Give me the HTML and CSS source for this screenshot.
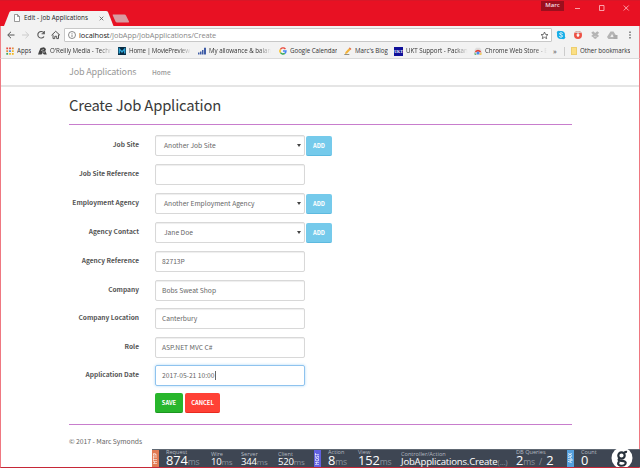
FILE: index.html
```html
<!DOCTYPE html>
<html lang="en">
<head>
<meta charset="utf-8">
<title>Edit - Job Applications</title>
<link rel="stylesheet" href="styles.css">
</head>
<body>
<div class="window">
  <header class="titlebar">
    <div class="tab">
      <svg class="tab-shape" viewBox="0 0 110 16"><path d="M0 16 L5.5 2 Q6.2 1 7.5 1 H102 Q103.5 1 104 2 L109.5 16Z"/></svg>
      <svg class="ico doc" viewBox="0 0 8 8"><path d="M1.5.5h3l2 2v5h-5zM4.5.5v2h2" fill="#fff" stroke="#666" stroke-width=".65"/></svg>
      <span class="tab-title">Edit - Job Applications</span>
      <svg class="tab-close" viewBox="0 0 5 5"><path d="M.7.7l3.6 3.6M4.3.7L.7 4.3" stroke="#555" stroke-width=".8"/></svg>
    </div>
    <svg class="new-tab" viewBox="0 0 18 9"><path d="M1 .5h11.500q1 0 1.500 1l3 6q.3 1-.7 1H5q-1 0-1.500-1L.8 1.500Q.3.5 1 .5z" fill="#d99ba1"/></svg>
    <span class="user">Marc</span>
    <svg class="winbtns" viewBox="0 0 56 9" fill="none" stroke="#ffc4c9" stroke-width=".8"><path d="M1 5.500h5M25.500 2.500h4.500v5h-4.500zM49.700 2.500l5 5M54.700 2.500l-5 5"/></svg>
  </header>
  <div class="toolbar">
    <svg class="nav-icons" viewBox="0 0 58 12" fill="none" stroke-width="1">
      <path d="M8.500 6H2M5 2.800L1.700 6 5 9.200" stroke="#555"/>
      <path d="M16 6h6.500M19.500 2.800L22.800 6l-3.300 3.200" stroke="#ccc"/>
      <path d="M37.800 3.800A3.300 3.300 0 1 0 38 7.400M38.300 2v2.700h-2.700" stroke="#555" stroke-width="1.100"/>
      <path d="M45.500 6.300L49.700 2.300 54 6.300M47 5.600v4h1.800V7.300h1.900v2.300h1.800v-4" stroke="#555"/>
    </svg>
    <div class="omnibox">
      <svg class="ico" viewBox="0 0 8 8" fill="none" stroke="#666" stroke-width=".75"><circle cx="4" cy="4" r="3.500"/><path d="M4 3.500V6M4 2v.8"/></svg>
      <span class="url"><b>localhost</b>/JobApp/JobApplications/Create</span>
      <svg class="star" viewBox="0 0 9 9"><path d="M4.500 1l1 2.400 2.500.2L6.100 5.200l.6 2.500-2.200-1.400-2.200 1.400.6-2.500L1 3.600l2.500-.2z" fill="none" stroke="#555" stroke-width=".8"/></svg>
    </div>
    <svg class="ext-icons" viewBox="0 0 80 12">
      <circle cx="6" cy="6" r="4" fill="#17aee8"/><circle cx="3.800" cy="3.800" r="2" fill="#17aee8"/><circle cx="8.200" cy="8.200" r="2" fill="#17aee8"/><path d="M7.600 4.500C6.500 3.500 4.400 3.800 4.600 5 4.800 6 7.300 5.700 7.500 6.900 7.600 8.200 5.400 8.500 4.300 7.400" fill="none" stroke="#fff" stroke-width="1"/>
      <circle cx="23" cy="6" r="4" fill="#ed5145"/><path d="M19.500 4a4 4 0 0 1 7 0L23 4z" fill="#d5c5c3"/><path d="M23 3.500v3M21.800 5.800L23 7.700l1.200-1.900z" fill="#fff" stroke="#fff" stroke-width="1"/>
      <path d="M36.200 3.800l2-1.500L40.200 4l2-1.700 2 1.500-1.800 1.600 1.800 1.500-2 1.300-2-1.500-2 1.500-2-1.300L38 5.400zM38 8.700l2.200-1.500 2.200 1.500-2.200 1.300z" fill="#b4b4b4"/>
      <path d="M55.500 2.500h3L62 8l-1.500 2H53.500L52 8z" fill="#b4b4b4"/><path d="M57 5l-1.700 3H59z" fill="#eee"/><path d="M58.500 6h4v4h-4z" fill="#aaa"/>
      <path d="M74.300 2.500h1.400v1.400h-1.400zM74.300 5.300h1.400v1.400h-1.400zM74.300 8.100h1.400v1.400h-1.400z" fill="#666"/>
    </svg>
  </div>
  <nav class="bookmarks">
    <span class="bm"><svg class="ico" viewBox="0 0 8 8"><path d="M.3.5h1.800v1.800H.3zM3.100.5h1.800v1.800H3.100z" fill="#e54b3c"/><path d="M5.900.5h1.800v1.800H5.900zM.3 3.200h1.800V5H.3z" fill="#e58b37"/><path d="M3.100 3.200h1.800V5H3.100z" fill="#4384e8"/><path d="M5.900 3.200h1.800V5H5.900zM3.100 5.900h1.800v1.800H3.100zM5.900 5.900h1.800v1.800H5.900z" fill="#f2b51e"/><path d="M.3 5.900h1.800v1.800H.3z" fill="#3ca55c"/></svg><span class="bt apps">Apps</span></span>
    <span class="bm"><svg class="ico wide" viewBox="0 0 9 8"><path d="M0 7.500L1 4.500 2.500 1 6 .3 8 2 7.300 4l1.500 3.500H6L4.500 6 3.500 7.500z" fill="#444"/><path d="M3 3.500l3-1M4 5h3" stroke="#ddd" stroke-width=".7"/></svg><span class="bt fade">O'Reilly Media - Techn</span></span>
    <span class="bm"><svg class="ico" viewBox="0 0 8 8"><path d="M0 0h8v8H0z" fill="#082b43"/><path d="M1.300 6.500V2L4 5l2.700-3v4.500" fill="none" stroke="#2fa6d8" stroke-width="1.300"/></svg><span class="bt fade movie">Home | MoviePreview</span></span>
    <span class="bm"><svg class="ico" viewBox="0 0 8 8"><path d="M0 5.500h1.500v2H0zM2 4.500h1.500v3H2zM4 3h1.500v4.500H4zM6 .8h2v6.700H6z" fill="#3e5ca6"/></svg><span class="bt fade">My allowance &amp; balan</span></span>
    <span class="bm"><svg class="ico" viewBox="0 0 8 8" fill="none" stroke-width="1.400"><path d="M6.400 2A3 3 0 0 0 1.400 2.500" stroke="#ea4335"/><path d="M1.400 2.500A3 3 0 0 0 1.500 5.700" stroke="#fbbc05"/><path d="M1.500 5.700A3 3 0 0 0 5.800 6.400" stroke="#34a853"/><path d="M5.800 6.400A3 3 0 0 0 7 4H4" stroke="#4285f4"/></svg><span class="bt">Google Calendar</span></span>
    <span class="bm"><svg class="ico" viewBox="0 0 8 8"><path d="M1 7l.5-2L5.700.6l1.600 1.500L3 6.500z" fill="#f2b33b"/><path d="M5 1.300L5.800.4l1.600 1.500-.8.9z" fill="#d66"/><path d="M.3 7.500h5" stroke="#665" stroke-width=".7"/></svg><span class="bt">Marc's Blog</span></span>
    <span class="bm"><span class="ukt">UKT</span><span class="bt fade">UKT Support - Packan</span></span>
    <span class="bm"><svg class="ico" viewBox="0 0 8 8"><path d="M.5 3L2 .8h4L7.500 3v4.700h-7z" fill="#ddd"/><path d="M.6 5.500a3.500 3.500 0 0 1 6.800 0L4 4.500z" fill="#e34133"/><path d="M.6 5.500L2.500 7.700H.6z" fill="#37a852"/><path d="M7.400 5.500L5 7.700h2.500z" fill="#f7c533"/><circle cx="4" cy="6" r="1.500" fill="#4687f0"/></svg><span class="bt fade">Chrome Web Store - E</span></span>
    <span class="more">»</span>
    <span class="bm other"><span class="folder"></span><span class="bt">Other bookmarks</span></span>
  </nav>
  <main class="page">
    <nav class="navbar"><span class="brand">Job Applications</span><span class="home">Home</span></nav>
    <section class="content">
      <h1>Create Job Application</h1>
      <form class="form">
        <label>Job Site</label><div class="field select"><span>Another Job Site</span></div><span class="btn add">ADD</span>
        <label>Job Site Reference</label><div class="field"></div>
        <label>Employment Agency</label><div class="field select"><span>Another Employment Agency</span></div><span class="btn add">ADD</span>
        <label>Agency Contact</label><div class="field select"><span>Jane Doe</span></div><span class="btn add">ADD</span>
        <label>Agency Reference</label><div class="field"><span>82713P</span></div>
        <label>Company</label><div class="field"><span>Bobs Sweat Shop</span></div>
        <label>Company Location</label><div class="field"><span>Canterbury</span></div>
        <label>Role</label><div class="field"><span>ASP.NET MVC C#</span></div>
        <label>Application Date</label><div class="field focus"><span>2017-05-21 10:00</span><i class="caret"></i></div>
        <div class="actions"><span class="btn save">SAVE</span><span class="btn cancel">CANCEL</span></div>
      </form>
      <footer>© 2017 - Marc Symonds</footer>
    </section>
    <aside class="glimpse">
      <span class="side http"><i>HTTP</i></span>
      <span class="stat request"><small>Request</small><b>874<em>ms</em></b></span>
      <span class="stat sm wire"><small>Wire</small><b>10<em>ms</em></b></span>
      <span class="stat sm server"><small>Server</small><b>344<em>ms</em></b></span>
      <span class="stat sm client"><small>Client</small><b>520<em>ms</em></b></span>
      <span class="side host"><i>HOST</i></span>
      <span class="stat action"><small>Action</small><b>8<em>ms</em></b></span>
      <span class="stat view"><small>View</small><b>152<em>ms</em></b></span>
      <span class="stat sm ctrl"><small>Controller/Action</small><b>JobApplications.Create<em>(...)</em></b></span>
      <span class="stat db"><small>DB Queries</small><b>2<em>ms</em><em class="slash">/</em>2</b></span>
      <span class="side ajax"><i>AJAX</i></span>
      <span class="stat count"><small>Count</small><b>0</b></span>
      <svg class="logo" viewBox="0 0 24 18"><circle cx="12" cy="9" r="10.500" fill="#fff"/><g fill="none" stroke="#27313b" stroke-width="2.200"><circle cx="11.500" cy="6.500" r="3.200"/><path d="M14 4.200Q15 2.500 17 3M9.500 9.200q-2 1.800.2 2.500l4 .4q2.800.7 1.600 3-1.500 2.200-5 1.500-3.500-1-1.300-3.900"/></g></svg>
    </aside>
  </main>
</div>
</body>
</html>
```
FILE: styles.css
```css
* { box-sizing: border-box; }
body { margin: 0; font-family: "Open Sans", "Noto Sans", sans-serif; background: #fff; }
.window { width: 640px; height: 468px; overflow: hidden; display: flex; flex-direction: column; }
svg { display: block; flex: none; }
.ico { width: 8px; height: 8px; }
.ico.wide { width: 9px; }

.titlebar { height: 26px; flex: none; background: #e81123; display: flex; align-items: flex-start; border-top: 1px solid #d91627; }
.tab { position: relative; width: 110px; height: 16px; margin: 9px 0 0 4px; display: flex; align-items: center; }
.tab-shape { position: absolute; inset: 0; width: 110px; height: 16px; fill: #f2f2f2; }
.doc { position: relative; margin-left: 9px; }
.tab-title { position: relative; width: 70px; margin-left: 3px; font-size: 6.3px; letter-spacing: .03px; line-height: 10px; white-space: nowrap; color: #222; }
.tab-close { position: relative; width: 5px; height: 5px; margin-left: 5px; }
.new-tab { width: 18px; height: 9px; margin-top: 13px; margin-left: -2px; }
.user { width: 23px; height: 10px; margin-left: 411px; background: #9c0f1d; color: #f6dfe1; font-size: 6px; font-weight: 600; line-height: 9px; text-align: center; }
.winbtns { width: 56px; height: 9px; margin: 2px 0 0 10px; }

.toolbar { height: 18px; flex: none; background: #f2f2f2; display: flex; align-items: center; padding: 0 2px 0 5px; border-left: 1px solid #ef8088; border-right: 1px solid #ef8088; }
.nav-icons { width: 58px; height: 12px; }
.omnibox { width: 488px; height: 14px; border: 1px solid #c8c8c8; border-radius: 1px; background: #fff; display: flex; align-items: center; padding: 0 2px 0 3px; }
.url { margin-left: 3px; flex: 1; font-size: 7.4px; line-height: 12px; color: #888; white-space: nowrap; letter-spacing: -.06px; }
.url b { font-weight: 400; color: #222; }
.star { width: 9px; height: 9px; }
.ext-icons { width: 80px; height: 12px; margin-left: 3px; }

.bookmarks { height: 15px; flex: none; background: #f2f2f2; border: 1px solid #ef8088; border-top: 0; border-bottom: 1px solid #dadada; display: grid; grid-template-columns: 32px 80px 80px 81px 65px 50px 80px 79px 11px 1fr; align-items: center; padding-left: 5px; }
.bm { display: flex; align-items: center; }
.bt { margin-left: 3px; font-size: 6.2px; line-height: 10px; color: #333; white-space: nowrap; overflow: hidden; letter-spacing: -.03px; }
.fade { width: 62px; -webkit-mask-image: linear-gradient(90deg, #000 80%, transparent); mask-image: linear-gradient(90deg, #000 80%, transparent); }
.movie { letter-spacing: -.18px; }
.ukt { width: 9px; height: 9px; background: #10109a; color: #fff; font: bold 4px/9px "Liberation Serif", serif; text-align: center; }
.more { font-size: 7.5px; line-height: 10px; color: #444; }
.other { border-left: 1px solid #ccc; padding-left: 6px; height: 9px; }
.folder { width: 6px; height: 8px; background: #fbdf84; border: 1px solid #ecce70; }

.page { flex: 1; display: flex; flex-direction: column; border: 1px solid #ef7881; border-top: 0; border-bottom-color: #c62837; background: #fff; }
.navbar, .content { font-family: "Noto Sans CJK SC", "Noto Sans", sans-serif; }
.navbar { height: 28px; flex: none; border-bottom: 2px solid #e5e5e5; padding: 0 0 1px 68px; display: flex; align-items: center; color: #999; }
.brand { width: 83px; font-size: 9px; line-height: 12px; letter-spacing: -.17px; white-space: nowrap; }
.home { font-size: 6.5px; line-height: 10px; font-weight: 500; }
.content { width: 503px; margin-left: 68px; height: 362px; flex: none; }
h1 { margin: 0; height: 38px; padding-top: 8px; font-size: 14.8px; line-height: 19px; font-weight: 400; letter-spacing: -.18px; color: #3a3a3a; border-bottom: 1px solid #c87dcd; white-space: nowrap; }
.form { height: 300px; border-bottom: 1px solid #c87dcd; padding-top: 10px; display: grid; grid-template-columns: 70px 150px 26px; column-gap: 0; grid-template-rows: 29.2px 28.8px 29.3px 29.2px 28.5px 28.3px 28.4px 28.3px 28px 24px; }
.form label { grid-column: 1; font-size: 6.6px; font-weight: 700; line-height: 19px; color: #555; text-align: right; white-space: nowrap; }
.field { grid-column: 2; height: 21px; margin-left: 16px; width: 150px; border: 1px solid #d8d8d8; border-radius: 2px; padding-left: 6px; font-size: 6.7px; line-height: 19px; color: #666; display: flex; align-items: center; white-space: nowrap; box-shadow: inset 0 1px 1px #eee; }
.select { padding: 0 3px 0 8px; justify-content: space-between; }
.select::after { content: ""; border: 2px solid transparent; border-top: 3px solid #444; border-bottom: 0; }
.focus { border-color: #8fc3ee; box-shadow: 0 0 3px #add8f5; }
.caret { width: 1px; height: 9px; background: #666; }
.btn { height: 20px; border-radius: 2px; color: #fff; font-size: 5.8px; font-weight: 700; line-height: 19px; text-align: center; }
.add { grid-column: 3; margin: 1px 0 0 17px; width: 26px; background: #75caeb; border-bottom: 1px solid #5cb9df; }
.actions { grid-column: 2 / 4; display: flex; gap: 2px; margin-left: 16px; }
.save { width: 28px; background: #28b62c; border-bottom: 1px solid #1c9520; }
.cancel { width: 35px; background: #ff4136; border-bottom: 1px solid #e8291e; }
footer { padding-top: 11px; font-size: 6.8px; line-height: 11px; color: #666; letter-spacing: -.05px; }

.glimpse { width: 488px; height: 18px; margin: auto -1px 0 151px; background: #3e4653; display: flex; color: #fff; border-top: 1px solid #606873; }
.side { width: 7px; flex: none; display: flex; align-items: center; justify-content: center; }
.side i { font-style: normal; font-size: 4.5px; font-weight: 600; writing-mode: vertical-rl; transform: rotate(180deg); line-height: 7px; }
.http { background: #e27b54; }
.host { background: #6161e0; }
.ajax { background: #559fdc; }
.stat { display: flex; flex-direction: column; flex: none; white-space: nowrap; padding-left: 7px; }
.stat small { font-size: 5.6px; line-height: 4px; color: #b4bac2; }
.stat b { font-size: 12.8px; line-height: 13px; font-weight: 400; letter-spacing: -.1px; }
.stat em { font-style: normal; font-size: 8.6px; line-height: 8px; color: #8b929e; }
.stat .slash { margin: 0 4px; }
.sm small { margin-top: 2px; line-height: 5px; }
.sm b { font-size: 9.6px; line-height: 9px; letter-spacing: -.2px; }
.sm em { font-size: 8px; }
.request { width: 52px; }
.wire, .server, .client, .action, .view, .ctrl, .db { padding-left: 0; }
.wire { width: 30px; }
.server { width: 37px; }
.client { width: 36px; }
.action { width: 30px; margin-left: 7px; }
.view { width: 43px; }
.ctrl { width: 115px; }
.db { width: 51px; }
.count { width: 36px; }
.logo { width: 24px; height: 18px; margin-top: -1px; }
```
